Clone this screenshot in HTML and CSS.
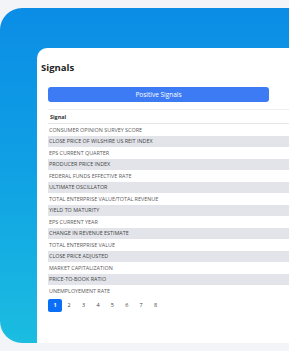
FILE: index.html
```html
<!DOCTYPE html>
<html lang="en">
<head>
    <meta charset="UTF-8">
    <meta name="viewport" content="width=device-width, initial-scale=1.0">
    <title>Signals</title>
    <link rel="stylesheet" href="styles.css">
</head>
<body>

    <div class="panel">
        <div class="card">
            <h1>Signals</h1>
            <div class="content">
                <button type="button" class="tab">Positive Signals</button>

                <table class="signals">
                    <thead>
                        <tr><th>Signal</th></tr>
                    </thead>
                    <tbody>
                        <tr><td>CONSUMER OPINION SURVEY SCORE</td></tr>
                        <tr><td>CLOSE PRICE OF WILSHIRE US REIT INDEX</td></tr>
                        <tr><td>EPS CURRENT QUARTER</td></tr>
                        <tr><td>PRODUCER PRICE INDEX</td></tr>
                        <tr><td>FEDERAL FUNDS EFFECTIVE RATE</td></tr>
                        <tr><td>ULTIMATE OSCILLATOR</td></tr>
                        <tr><td>TOTAL ENTERPRISE VALUE/TOTAL REVENUE</td></tr>
                        <tr><td>YIELD TO MATURITY</td></tr>
                        <tr><td>EPS CURRENT YEAR</td></tr>
                        <tr><td>CHANGE IN REVENUE ESTIMATE</td></tr>
                        <tr><td>TOTAL ENTERPRISE VALUE</td></tr>
                        <tr><td>CLOSE PRICE ADJUSTED</td></tr>
                        <tr><td>MARKET CAPITALIZATION</td></tr>
                        <tr><td>PRICE-TO-BOOK RATIO</td></tr>
                        <tr><td>UNEMPLOYEMENT RATE</td></tr>
                    </tbody>
                </table>

                <div class="pages">
                    <span class="page active">1</span>
                    <span class="page">2</span>
                    <span class="page">3</span>
                    <span class="page">4</span>
                    <span class="page">5</span>
                    <span class="page">6</span>
                    <span class="page">7</span>
                    <span class="page">8</span>
                </div>
            </div>
        </div>
    </div>

</body>
</html>
```

FILE: styles.css
```css
body {
    margin: 0;
    font-family: "Open Sans", Arial, sans-serif;
    background-color: #f2f4f7;
}

.panel {
    margin-top: 8px;
    height: 335px;
    border-radius: 22px 0 0 22px;
    background: linear-gradient(180deg, #0b8de6 0%, #0f9fe4 45%, #1bbde0 100%);
    padding: 40px 0 0 37px;
    box-sizing: border-box;
}

.card {
    background-color: #fff;
    height: 100%;
    border-top-left-radius: 10px;
    padding: 13px 0 0 4px;
    box-sizing: border-box;
}

h1 {
    margin: 0;
    font-size: 9.5px;
    font-weight: 700;
    color: #222;
    line-height: 13px;
}

.content {
    padding: 13px 0 0 7px;
}

.tab {
    display: block;
    width: 221px;
    height: 15px;
    border: none;
    border-radius: 3px;
    background-color: #3d7bf4;
    color: #fff;
    font-family: inherit;
    font-size: 6.5px;
    padding: 0;
}

.signals {
    width: 100%;
    margin-top: 7px;
    border-collapse: collapse;
    font-size: 5.4px;
    color: #5a5a5a;
}

.signals th {
    text-align: left;
    font-weight: 700;
    color: #333;
    height: 13px;
    padding: 0 0 0 2px;
    border-top: 1px solid #eceef1;
    border-bottom: 1px solid #e4e6ea;
}

.signals td {
    height: 11.5px;
    padding: 0 0 0 1px;
    white-space: nowrap;
}

.signals tbody tr:nth-child(even) td {
    background-color: #e2e4ea;
    color: #444;
}

.pages {
    display: flex;
    align-items: center;
    margin-top: 2px;
}

.page {
    width: 14.4px;
    height: 13px;
    line-height: 13px;
    text-align: center;
    font-size: 5.5px;
    color: #444;
}

.page.active {
    background-color: #0b6ef6;
    color: #fff;
    font-weight: 700;
    border-radius: 2px;
    width: 14px;
}
```
